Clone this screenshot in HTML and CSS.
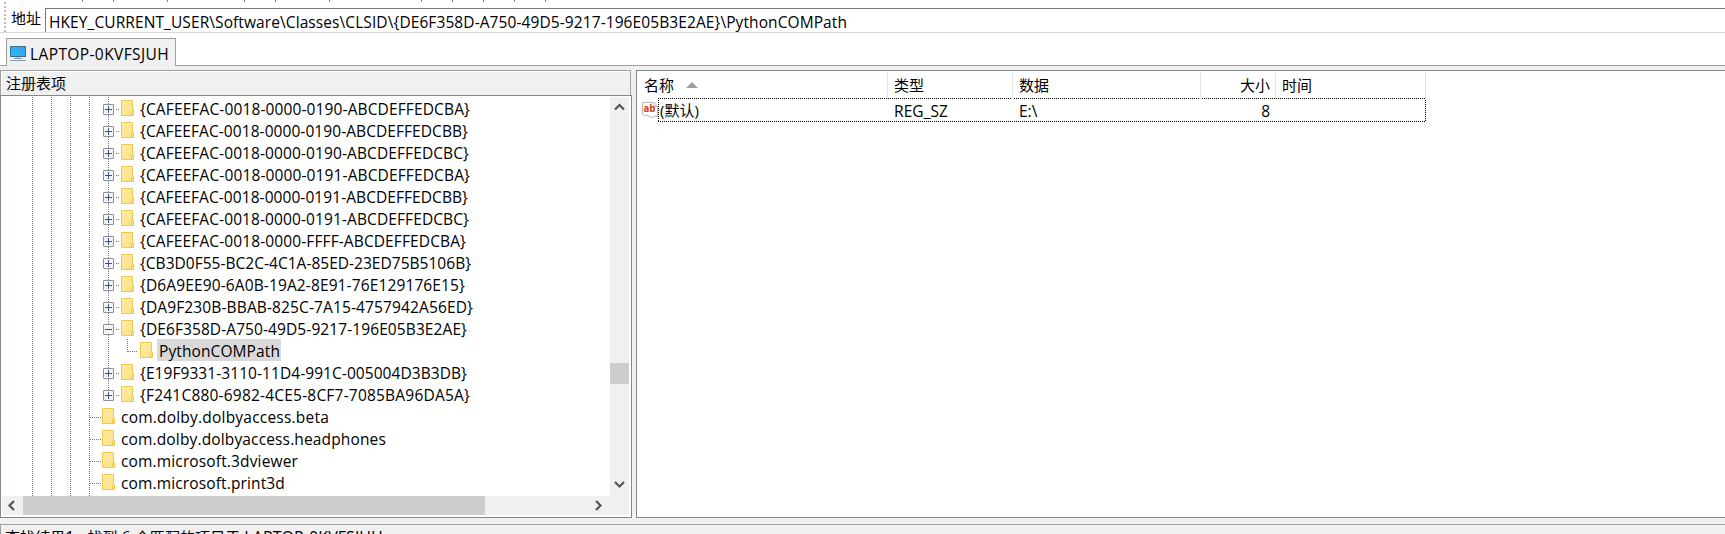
FILE: index.html
```
<!DOCTYPE html>
<html lang="zh-CN">
<head>
<meta charset="utf-8">
<title>注册表</title>
<link rel="stylesheet" href="styles.css">
</head>
<body>
<svg class="defs" width="0" height="0">
  <defs>
    <linearGradient id="fold" x1="0" y1="0" x2="1" y2="1"><stop offset="0" stop-color="#ffeba6"/><stop offset="1" stop-color="#ffe184"/></linearGradient>
    <linearGradient id="scr" x1="0" y1="1" x2="1" y2="0"><stop offset="0" stop-color="#38b4f7"/><stop offset="1" stop-color="#2aa5f0"/></linearGradient>
    <symbol id="folder" viewBox="0 0 13 16"><path d="M.5.5h11v10h1v5h-12z" fill="url(#fold)" stroke="#edc94f"/><path d="M10.500 15.500v-4l1-1" fill="none" stroke="#edc94f"/></symbol>
    <symbol id="plus" viewBox="0 0 11 11"><rect x=".5" y=".5" width="10" height="10" rx=".5" fill="#f4f4f4" stroke="#919191"/><path d="M2 5.500h7M5.500 2v7" stroke="#3a4f94"/></symbol>
    <symbol id="minus" viewBox="0 0 11 11"><rect x=".5" y=".5" width="10" height="10" rx=".5" fill="#f4f4f4" stroke="#919191"/><path d="M2 5.500h7" stroke="#3a4f94"/></symbol>
  </defs>
</svg>
<div class="window">
  <div class="toolbar-edge"><i></i><i></i><i></i><i></i><i></i><i></i><i></i><i></i><i></i><i></i><i></i></div>
  <div class="address">
    <span class="grip"></span>
    <span class="address-label">地址</span>
    <div class="address-box"><span class="t path">HKEY_CURRENT_USER\Software\Classes\CLSID\{DE6F358D-A750-49D5-9217-196E05B3E2AE}\PythonCOMPath</span></div>
  </div>
  <div class="tabs">
    <div class="tab">
      <svg width="16" height="16" viewBox="0 0 16 16"><rect x=".5" y=".5" width="15" height="10" fill="url(#scr)" stroke="#3c6f96"/><path d="M6 11.500h4" stroke="#b8c4cc"/><path d="M4 12.500h8" stroke="#8fa0ad"/><path d="M0 14.500h16" stroke="#8b9dab"/></svg>
      <span class="t host">LAPTOP-0KVFSJUH</span>
    </div>
  </div>
  <div class="panes">
    <div class="left">
      <div class="left-title">注册表项</div>
      <div class="tree">
        <div class="tree-main">
          <ul class="nodes" id="nodes"></ul>
          <div class="vbar">
            <svg width="19" height="20" viewBox="0 0 19 20"><path d="M5 12.500L9.500 8l4.500 4.500" fill="none" stroke="#555" stroke-width="2.200"/></svg>
            <span class="vthumb"></span>
            <svg width="19" height="20" viewBox="0 0 19 20"><path d="M5 6l4.500 4.500L14 6" fill="none" stroke="#555" stroke-width="2.200"/></svg>
          </div>
        </div>
        <div class="hbar">
          <svg width="21" height="19" viewBox="0 0 21 19"><path d="M12 5L7.500 9.500 12 14" fill="none" stroke="#555" stroke-width="2.200"/></svg>
          <span class="hthumb"></span>
          <svg class="hright" width="21" height="19" viewBox="0 0 21 19"><path d="M8 5l4.500 4.500L8 14" fill="none" stroke="#555" stroke-width="2.200"/></svg>
        </div>
      </div>
    </div>
    <div class="right">
      <div class="row head">
        <div class="c name">名称<svg class="sort" width="12" height="6" viewBox="0 0 12 6"><path d="M0 6L6 0l6 6z" fill="#a0a0a0"/></svg></div>
        <div class="c">类型</div><div class="c">数据</div><div class="c num">大小</div><div class="c">时间</div>
      </div>
      <div class="row value">
        <svg class="ab" width="16" height="16" viewBox="0 0 16 16"><path d="M.5.500H12l3.500 4V15l-1.500-1-2 .500-2 1-3-1-2-1.500-2 .500-2.500-1z" fill="#fff" stroke="#b9b9b9"/><path d="M12 .500v4h3.500" fill="#eee" stroke="#b9b9b9"/><text x="1.500" y="10" class="ab-text" textLength="12" lengthAdjust="spacingAndGlyphs">ab</text></svg>
        <div class="c name">(默认)</div>
        <div class="c"><span class="t reg">REG_SZ</span></div><div class="c"><span class="t">E:\</span></div><div class="c num"><span class="t">8</span></div><div class="c"></div>
      </div>
    </div>
  </div>
  <div class="results"><span class="found">查找结果<b>1</b> - 找到 <b>6</b> 个匹配的项目于 <b>LAPTOP-0KVFSJUH</b></span></div>
</div>
<script src="tree.js"></script>
</body>
</html>
```
FILE: styles.css
```
* { box-sizing: border-box; }
body { margin: 0; background: #f0f0f0; color: #000; font: 15px/22px "Open Sans", "Noto Sans CJK SC", sans-serif; overflow: hidden; }
.defs { position: absolute; }
.window { height: 534px; display: flex; flex-direction: column; overflow: hidden; white-space: nowrap; }
.window svg { display: block; flex: none; }
.t { display: block; font-size: 15.500px; }
.toolbar-edge { height: 2px; flex: none; background: #fff; display: grid; grid-template-columns: 31px 54px 77px 31px 54px 92px 31px 31px 31px 31px 1px; padding-left: 82px; }
.toolbar-edge i { width: 1px; height: 2px; background: #808080; }
.address { height: 31px; flex: none; background: #fff; border-bottom: 1px solid #dadada; display: flex; }
.grip { width: 2px; margin-left: 4px; background: repeating-linear-gradient(#b8b8b8 0 2px, #fff 2px 4px); }
.address-label { width: 39px; padding-left: 5px; line-height: 33px; }
.address-box { flex: 1; height: 24px; margin-top: 6px; border: solid #7a7a7a; border-width: 1px 0 0 1px; padding-left: 3px; line-height: 26px; }
.tabs { height: 33px; flex: none; background: #fff; border-bottom: 1px solid #a0a0a0; padding: 5px 0 0 6px; }
.tab { width: 170px; height: 28px; background: #f0f0f0; border: 1px solid #a0a0a0; border-bottom: 0; display: flex; padding: 7px 0 0 3px; gap: 4px; }
.tab .t { margin-top: -3px; }
.panes { height: 448px; margin-top: 4px; flex: none; display: flex; gap: 4px; }
.left { width: 632px; display: flex; flex-direction: column; }
.left-title { width: 631px; height: 25px; border: 1px solid #a0a0a0; border-bottom: 0; box-shadow: inset 1px 1px #fff; line-height: 25px; padding-left: 5px; }
.tree { height: 423px; background: #fff; border: 1px solid #828790; padding: 1px; }
.tree-main { height: 399px; display: flex; }
.nodes { list-style: none; margin: 0; padding: 0; flex: 1; }
.node { height: 22px; display: flex; }
.node > * { flex: none; }
.rails { width: 77px; margin-left: 30px; display: flex; gap: 18px; }
.rail { width: 1px; height: 22px; background: repeating-linear-gradient(#777 0 1px, #fff 1px 2px); }
.node:last-child .rail { height: 25px; }
.joint { width: 18px; margin-left: -6px; display: grid; grid-template-columns: 6px 12px; }
.joint .rail { grid-area: 1 / 1; justify-self: end; }
.joint .toggle { grid-area: 1 / 1 / 2 / 3; width: 11px; height: 11px; margin-top: 7px; z-index: 1; }
.joint .stub { grid-area: 1 / 2; width: 3px; margin: 12px 0 0 7px; }
.stub { height: 1px; background: repeating-linear-gradient(90deg, #777 0 1px, #fff 1px 2px); }
.node .folder { width: 13px; height: 16px; margin-top: 3px; }
.node .t { margin-left: 4px; padding: 0 2px; height: 22px; line-height: 24px; }
.node .t.sel { background: #d9d9d9; width: 124px; }
.node.level5 .rails { width: 58px; }
.node.level5 .stub { width: 11px; margin: 12px 1px 0 0; }
.node.level7 .rails { width: 95px; }
.node.level7 .stub { width: 10px; margin: 12px 2px 0 0; }
.rail.half { height: 13px; }
.vbar { width: 19px; height: 399px; margin-right: 1px; background: #f0f0f0; display: flex; flex-direction: column; }
.vthumb { height: 21px; margin: 246px 0 92px; background: #cdcdcd; }
.hbar { height: 20px; background: #f0f0f0; display: flex; border-right: 1px solid #fff; border-bottom: 1px solid #fff; }
.hthumb { width: 462px; background: #cdcdcd; }
.hright { margin-left: 103px; }
.right { flex: 1; background: #fff; border: 1px solid #828790; border-right: 0; padding-top: 1px; }
.row { display: grid; grid-template-columns: 251px 125px 188px 75px 150px; }
.head { height: 26px; line-height: 27px; }
.head .c { border-right: 1px solid #e5e5e5; }
.c { padding-left: 6px; }
.c.num { text-align: right; padding-right: 5px; }
.head .name { padding-left: 7px; display: flex; gap: 12px; }
.sort { margin-top: 10px; }
.value { height: 24px; line-height: 25px; grid-template-columns: 21px 230px 125px 188px 75px 150px; background: repeating-linear-gradient(90deg, #000 0 1px, #fff 1px 2px) 21px 0 / 768px 1px no-repeat, repeating-linear-gradient(90deg, #000 0 1px, #fff 1px 2px) 21px 23px / 768px 1px no-repeat, repeating-linear-gradient(#000 0 1px, #fff 1px 2px) 21px 0 / 1px 24px no-repeat, repeating-linear-gradient(#000 0 1px, #fff 1px 2px) 788px 0 / 1px 24px no-repeat; }
.value .t { line-height: 26px; }
.value .name { padding-left: 2px; }
.value .num { padding-right: 6px; }
.ab { margin: 4px 0 0 5px; }
.ab-text { font: bold 10px "DejaVu Sans", sans-serif; fill: #d24726; }
.results { height: 10px; margin-top: 6px; flex: none; border-top: 1px solid #a0a0a0; border-left: 1px solid #a0a0a0; padding-left: 4px; line-height: 25px; overflow: hidden; }
.found b { font-weight: 400; font-size: 16px; line-height: 1; }
```
FILE: tree.js
```
// [label, level, toggle, width of the label]
const items = [
  ['{CAFEEFAC-0018-0000-0190-ABCDEFFEDCBA}', 6, 'plus', 330],
  ['{CAFEEFAC-0018-0000-0190-ABCDEFFEDCBB}', 6, 'plus', 328],
  ['{CAFEEFAC-0018-0000-0190-ABCDEFFEDCBC}', 6, 'plus', 329],
  ['{CAFEEFAC-0018-0000-0191-ABCDEFFEDCBA}', 6, 'plus', 330],
  ['{CAFEEFAC-0018-0000-0191-ABCDEFFEDCBB}', 6, 'plus', 328],
  ['{CAFEEFAC-0018-0000-0191-ABCDEFFEDCBC}', 6, 'plus', 329],
  ['{CAFEEFAC-0018-0000-FFFF-ABCDEFFEDCBA}', 6, 'plus', 326],
  ['{CB3D0F55-BC2C-4C1A-85ED-23ED75B5106B}', 6, 'plus', 331],
  ['{D6A9EE90-6A0B-19A2-8E91-76E129176E15}', 6, 'plus', 325],
  ['{DA9F230B-BBAB-825C-7A15-4757942A56ED}', 6, 'plus', 333],
  ['{DE6F358D-A750-49D5-9217-196E05B3E2AE}', 6, 'minus', 327],
  ['PythonCOMPath', 7, '', 121],
  ['{E19F9331-3110-11D4-991C-005004D3B3DB}', 6, 'plus', 327],
  ['{F241C880-6982-4CE5-8CF7-7085BA96DA5A}', 6, 'plus', 330],
  ['com.dolby.dolbyaccess.beta', 5, '', 208],
  ['com.dolby.dolbyaccess.headphones', 5, '', 265],
  ['com.microsoft.3dviewer', 5, '', 177],
  ['com.microsoft.print3d', 5, '', 164]
];
const rail = '<i class="rail"></i>';
document.getElementById('nodes').innerHTML = items.map(([label, level, toggle], i) => {
  const rails = `<div class="rails">${rail.repeat(level === 7 ? 5 : 4)}</div>`;
  const folder = '<svg class="folder"><use href="#folder"/></svg>';
  let joint = '<i class="stub"></i>';
  if (level === 6) {
    joint = `<div class="joint"><i class="rail${i === 13 ? ' half' : ''}"></i><svg class="toggle"><use href="#${toggle}"/></svg><i class="stub"></i></div>`;
  } else if (level === 7) {
    joint = '<i class="rail half"></i><i class="stub"></i>';
  }
  return `<li class="node level${level}">${rails}${joint}${folder}<span class="t${level === 7 ? ' sel' : ''}">${label}</span></li>`;
}).join('');

// Tracks each line to its measured width in the native UI font.
function fit(el, width) {
  const range = document.createRange();
  range.selectNodeContents(el);
  const spare = width - range.getBoundingClientRect().width;
  el.style.letterSpacing = spare / el.textContent.length + 'px';
}
document.querySelectorAll('.node .t').forEach((el, i) => fit(el, items[i][3]));
fit(document.querySelector('.path'), 798);
fit(document.querySelector('.host'), 139);
fit(document.querySelector('.reg'), 54);
fit(document.querySelector('.found'), 378);
```
